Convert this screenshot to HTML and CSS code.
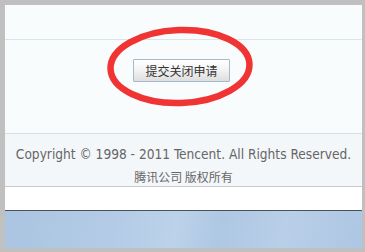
FILE: index.html
```html
<!DOCTYPE html>
<html>
<head>
<meta charset="utf-8">
<link rel="stylesheet" href="styles.css">
</head>
<body>
<div class="frame">
  <div class="top"></div>
  <div class="main">
    <button class="btn">提交关闭申请</button>
    <svg class="circle" width="160" height="90" viewBox="0 0 160 90">
      <ellipse cx="75" cy="41.5" rx="69.5" ry="36.5" fill="none" stroke="#f03333" stroke-width="6.5" transform="rotate(-2 75 41.5)"/>
    </svg>
  </div>
  <div class="footer">
    <div class="copy">Copyright © 1998 - 2011 Tencent. All Rights Reserved.</div>
    <div class="cn">腾讯公司 版权所有</div>
  </div>
  <div class="white"></div>
  <div class="blue"></div>
</div>
</body>
</html>
```

FILE: styles.css
```css
html, body {
  margin: 0;
  padding: 0;
}
body {
  background: #c0c0c0;
  width: 365px;
  height: 252px;
  overflow: hidden;
}
.frame {
  margin: 5px 3px 4px 5px;
  width: 357px;
  height: 243px;
  display: flex;
  flex-direction: column;
  background: #f8fcfd;
}
.top {
  height: 34px;
  border-bottom: 1px solid #d8e5ea;
}
.main {
  position: relative;
  height: 93px;
  border-bottom: 1px solid #d3dfe5;
  display: flex;
  justify-content: center;
  align-items: flex-start;
}
.btn {
  margin-top: 19px;
  margin-right: 4px;
  width: 97px;
  height: 23px;
  padding: 0;
  border: 1px solid #a5b9cc;
  border-radius: 1px;
  background: linear-gradient(#ffffff, #f4f4f4 45%, #dedede);
  font-family: "Noto Sans CJK SC", sans-serif;
  font-size: 12px;
  color: #333;
  line-height: 21px;
}
.circle {
  position: absolute;
  left: 100px;
  top: -15px;
}
.footer {
  height: 52px;
  background: #f4f7fa;
  border-bottom: 1px solid #c7cbcf;
  display: flex;
  flex-direction: column;
  align-items: center;
  color: #666;
}
.copy {
  margin-top: 12px;
  font-family: "DejaVu Sans", sans-serif;
  font-stretch: condensed;
  font-size: 13.6px;
  line-height: 16px;
  white-space: nowrap;
}
.cn {
  margin-top: 8px;
  font-family: "Noto Sans CJK SC", sans-serif;
  font-size: 12px;
  line-height: 14px;
}
.white {
  height: 23px;
  background: #ffffff;
  border-bottom: 1px solid #47525e;
}
.blue {
  flex: 1;
  background: linear-gradient(100deg, #aac4e1 0%, #b3cbe6 30%, #bcd2ea 48%, #aec7e3 60%, #b9cfe8 78%, #adc6e3 100%);
}
```
